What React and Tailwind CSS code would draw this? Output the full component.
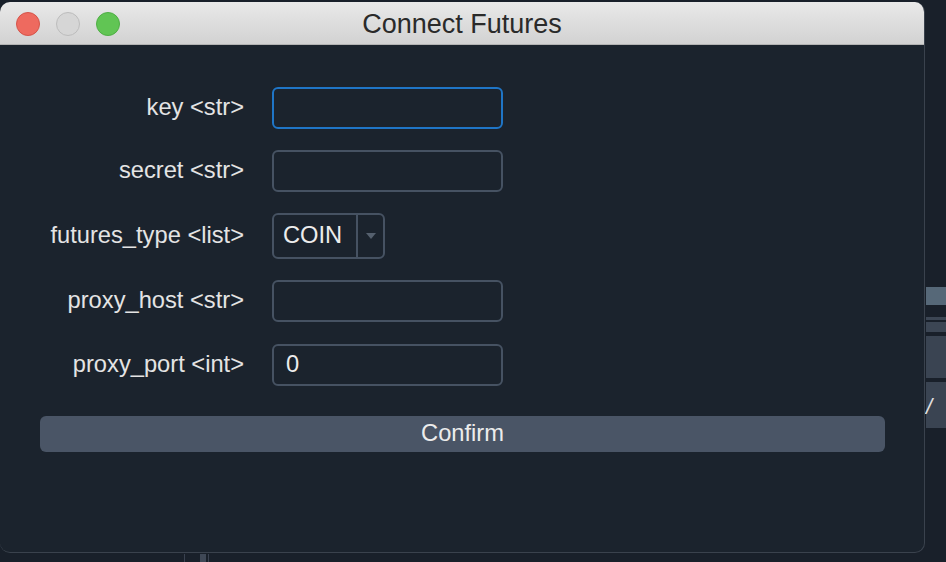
import React from "react";

const fields = [
  { label: "key <str>", kind: "text", value: "", focused: true },
  { label: "secret <str>", kind: "text", value: "" },
  { label: "futures_type <list>", kind: "combo", value: "COIN" },
  { label: "proxy_host <str>", kind: "text", value: "" },
  { label: "proxy_port <int>", kind: "text", value: "0" },
];

const font = { fontFamily: '"Liberation Sans", Arial, Helvetica, sans-serif' };

function TrafficLights() {
  return (
    <div className="flex items-center gap-[16px] pl-[16px] pt-[2px]">
      <span className="block h-[24px] w-[24px] rounded-full border border-[#d4544a] bg-[#ee6a5f]" />
      <span className="block h-[24px] w-[24px] rounded-full border border-[#bcbcbc] bg-[#d6d6d6]" />
      <span className="block h-[24px] w-[24px] rounded-full border border-[#4fae45] bg-[#61c554]" />
    </div>
  );
}

function Field({ field }) {
  if (field.kind === "combo") {
    return (
      <div className="flex h-[46px] w-[113px] items-stretch rounded-[6px] border-2 border-[#465262]">
        <div className="flex flex-1 items-center pl-[9px] text-[23.7px] text-[#ececec]">{field.value}</div>
        <div className="w-[2px] bg-[#465262]" />
        <div className="flex w-[25px] items-center justify-center">
          <svg width="10" height="6" viewBox="0 0 10 6">
            <path d="M0 0 L10 0 L5 6 Z" fill="#55606e" />
          </svg>
        </div>
      </div>
    );
  }
  return (
    <div
      className={
        "flex h-[42px] w-[231px] items-center rounded-[6px] border-2 pl-[12px] text-[23.7px] text-[#ececec] " +
        (field.focused ? "border-[#1f75c6]" : "border-[#465262]")
      }
    >
      {field.value}
    </div>
  );
}

export default function App() {
  return (
    <div className="relative h-[562px] w-[946px] overflow-hidden bg-[#19202a] pt-[2px]" style={font}>
      {/* desktop content peeking out behind the dialog */}
      <div className="absolute left-[926px] top-[287px] h-[18px] w-[20px] bg-[#566878]" />
      <div className="absolute left-[926px] top-[317px] h-[3px] w-[20px] bg-[#3c4654]" />
      <div className="absolute left-[926px] top-[322px] h-[10px] w-[20px] bg-[#3c4654]" />
      <div className="absolute left-[926px] top-[336px] h-[42px] w-[20px] bg-[#3a4452]" />
      <div className="absolute left-[926px] top-[382px] h-[46px] w-[20px] bg-[#3a4452]" />
      <div className="absolute left-[926px] top-[396px] text-[22px] italic leading-none text-[#e0e0e0]">/</div>
      <div className="absolute left-[184px] top-[554px] h-[8px] w-[1px] bg-[#3a4250]" />
      <div className="absolute left-[200px] top-[554px] h-[8px] w-[6px] bg-[#3f4856]" />
      <div className="absolute left-[208px] top-[554px] h-[8px] w-[1px] bg-[#3a4250]" />

      <div className="relative flex h-[551px] w-[925px] flex-col overflow-hidden rounded-[10px] border-r border-b border-[#3a424d] bg-[#1b232d]">
        <div className="relative flex h-[43px] items-center border-b border-[#b3b3b3] bg-gradient-to-b from-[#e9e9e9] to-[#d2d2d2]">
          <TrafficLights />
          <div className="absolute inset-0 flex items-center justify-center pt-[2px] text-[27px] text-[#2a2a2a]">
            Connect Futures
          </div>
        </div>

        <div className="flex flex-col gap-[21px] pt-[42px]">
          {fields.map((f, i) => (
            <div key={f.label} className={"flex items-center" + (i === 4 ? " mt-[1px]" : "")}>
              <div className="w-[244px] text-right text-[23.7px] text-[#e4e4e4]">{f.label}</div>
              <div className="ml-[28px]">
                <Field field={f} />
              </div>
            </div>
          ))}
        </div>

        <div className="pl-[40px] pr-[39px] pt-[30px]">
          <div className="flex h-[36px] items-center justify-center rounded-[6px] bg-[#4a5566] text-[23.7px] text-[#ececec]">
            Confirm
          </div>
        </div>
      </div>
    </div>
  );
}
